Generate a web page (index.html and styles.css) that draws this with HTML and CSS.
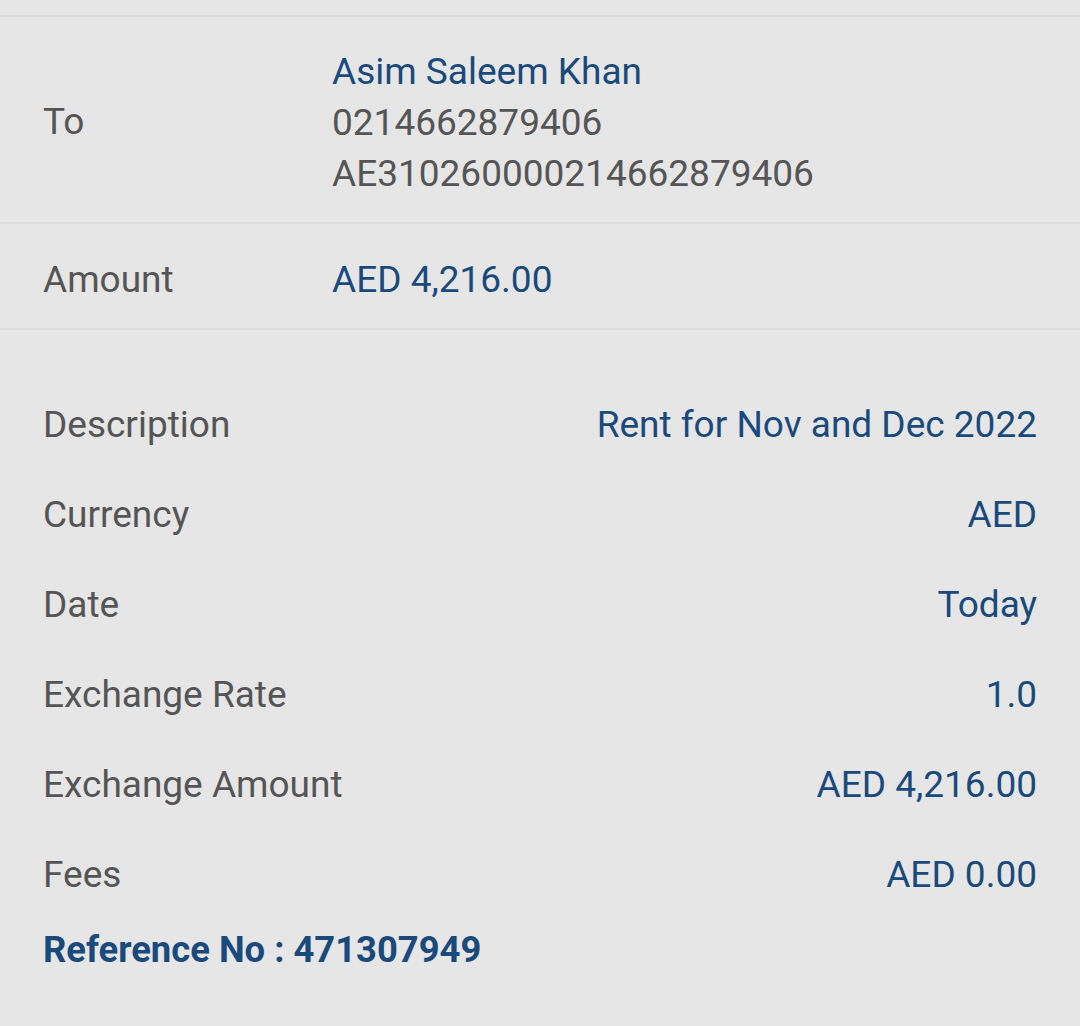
FILE: index.html
```html
<!DOCTYPE html>
<html>
<head>
<meta charset="utf-8">
<link rel="stylesheet" href="styles.css">
</head>
<body>
<div class="page">
  <div class="section to-row">
    <div class="label">To</div>
    <div class="to-values">
      <div class="value">Asim Saleem Khan</div>
      <div class="sub">0214662879406</div>
      <div class="sub">AE310260000214662879406</div>
    </div>
  </div>
  <div class="section amount-row">
    <div class="label">Amount</div>
    <div class="value amount-value">AED 4,216.00</div>
  </div>
  <div class="details">
    <div class="row"><span class="label">Description</span><span class="value">Rent for Nov and Dec 2022</span></div>
    <div class="row"><span class="label">Currency</span><span class="value">AED</span></div>
    <div class="row"><span class="label">Date</span><span class="value">Today</span></div>
    <div class="row"><span class="label">Exchange Rate</span><span class="value">1.0</span></div>
    <div class="row"><span class="label">Exchange Amount</span><span class="value">AED 4,216.00</span></div>
    <div class="row"><span class="label">Fees</span><span class="value">AED 0.00</span></div>
    <div class="reference">Reference No : 471307949</div>
  </div>
</div>
</body>
</html>
```
FILE: styles.css
```css
html, body {
  margin: 0;
  padding: 0;
  background: #e6e6e6;
}
body {
  font-family: Roboto, "Liberation Sans", sans-serif;
  font-size: 37px;
  width: 1080px;
  height: 1026px;
  overflow: hidden;
}
.page {
  padding-top: 15px;
}
.section {
  border-top: 2px solid #dcdcdc;
  display: flex;
  align-items: center;
  padding: 0 43px;
}
.label {
  color: #555555;
}
.value {
  color: #1a4a7c;
}
.sub {
  color: #555555;
}
.to-row {
  height: 205px;
}
.to-row .label,
.amount-row .label {
  width: 289px;
}
.to-row .label {
  padding-top: 4px;
}
.to-values {
  line-height: 51px;
  padding-top: 6px;
}
.amount-row {
  height: 104px;
  border-bottom: 2px solid #dcdcdc;
}
.amount-row .label,
.amount-value {
  padding-top: 6px;
}
.details {
  padding: 49px 43px 0 43px;
}
.row {
  display: flex;
  justify-content: space-between;
  align-items: center;
  height: 90px;
}
.reference {
  color: #1a4a7c;
  font-weight: bold;
  font-size: 36.4px;
  height: 60px;
  display: flex;
  align-items: center;
}
```
